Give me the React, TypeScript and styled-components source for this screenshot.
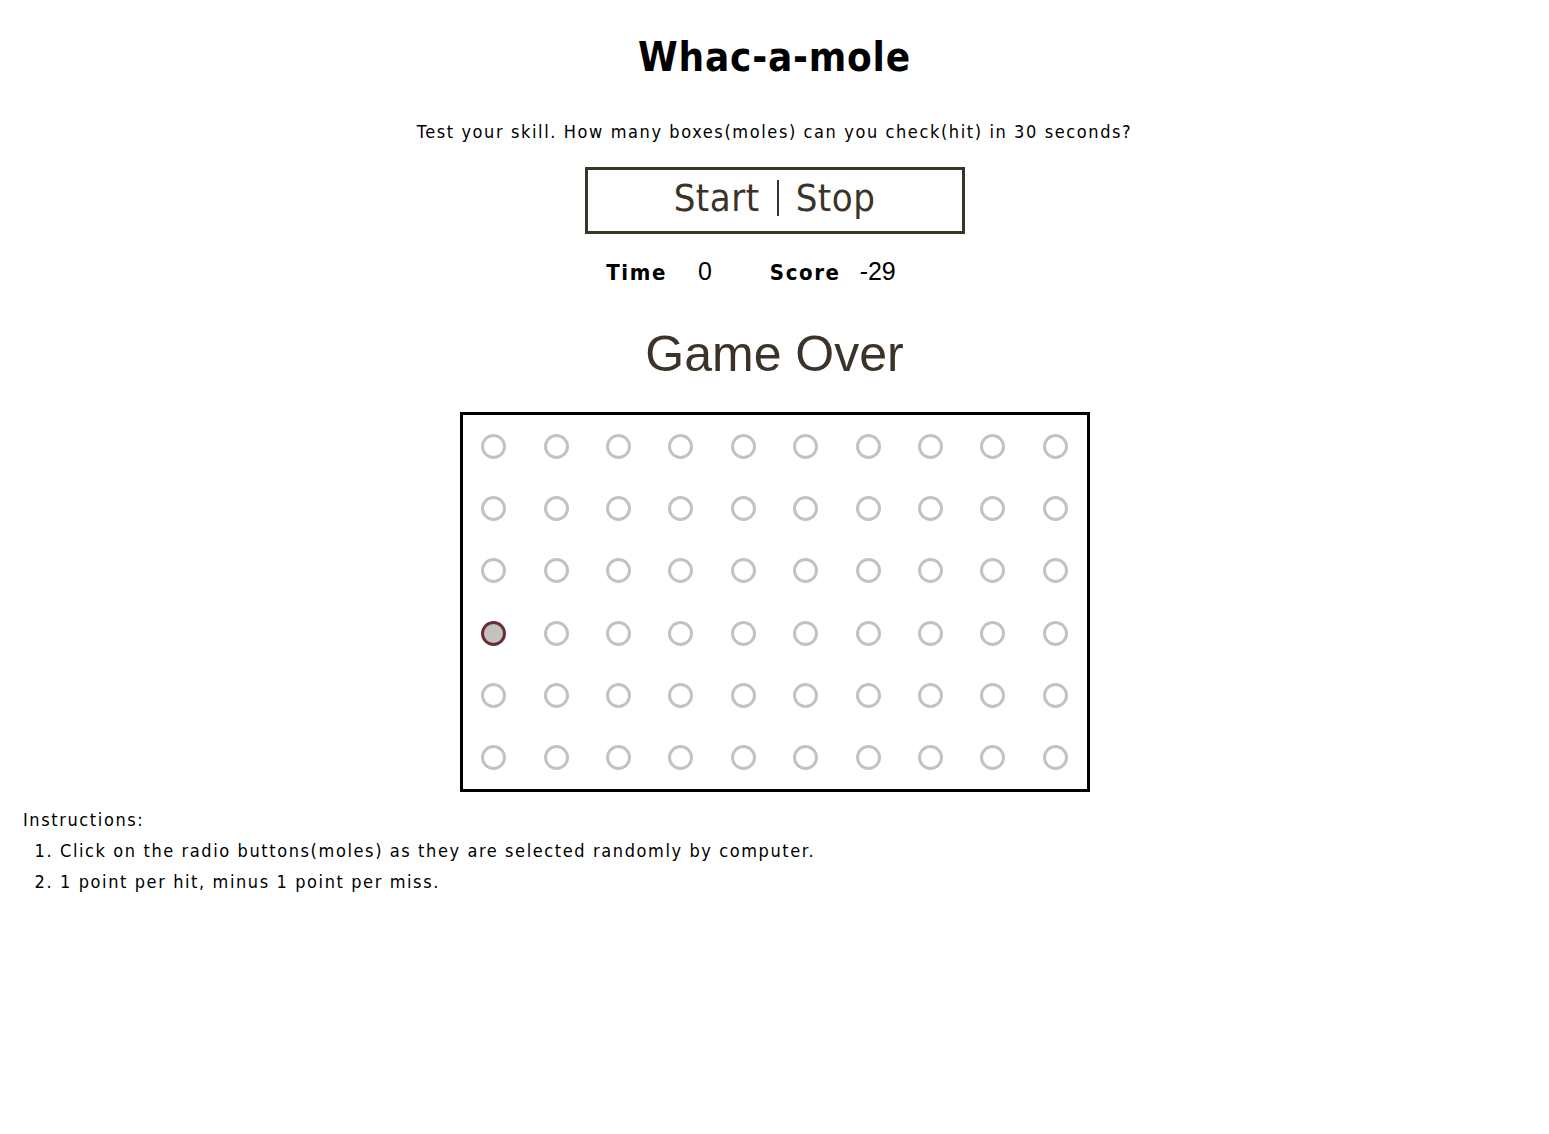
import React from 'react';
import styled, { createGlobalStyle } from 'styled-components';

const GlobalStyle = createGlobalStyle`
  html, body {
    margin: 0;
    padding: 0;
    background: #ffffff;
  }
  body {
    font-family: 'DejaVu Sans Condensed', 'DejaVu Sans', sans-serif;
    color: #000000;
  }
`;

const Page = styled.div`
  display: flex;
  flex-direction: column;
  align-items: center;
  padding-top: 32px;
`;

const Title = styled.h1`
  margin: 0;
  font-size: 40px;
  font-weight: bold;
  line-height: 50px;
  letter-spacing: 0.8px;
`;

const Intro = styled.p`
  margin: 38px 0 0;
  font-size: 18px;
  line-height: 24px;
  letter-spacing: 1.6px;
`;

const ToggleButton = styled.button`
  margin-top: 23px;
  width: 380px;
  height: 67px;
  padding: 0 0 6px;
  border: 3px solid #3b3228;
  background: #ffffff;
  color: #3b3228;
  font-family: inherit;
  font-size: 38px;
  letter-spacing: 0.5px;
  display: flex;
  align-items: center;
  justify-content: center;
  gap: 17px;
  cursor: pointer;
`;

const Divider = styled.span`
  width: 2px;
  height: 36px;
  background: #3b3228;
`;

const Stats = styled.div`
  margin-top: 22px;
  padding-right: 47px;
  display: flex;
  align-items: baseline;
  gap: 58px;
  font-size: 22px;
  line-height: 30px;
`;

const Stat = styled.div<{ $gap: number }>`
  display: flex;
  align-items: baseline;
  gap: ${({ $gap }) => $gap}px;
`;

const StatLabel = styled.span`
  font-weight: bold;
  letter-spacing: 1.6px;
`;

const StatValue = styled.span`
  font-family: 'Liberation Sans', Arial, sans-serif;
  font-size: 25px;
`;

const Status = styled.h2`
  margin: 36px 0 0;
  font-family: 'Liberation Sans', Arial, sans-serif;
  font-size: 50px;
  font-weight: normal;
  color: #3b3228;
  line-height: 60px;
`;

const Board = styled.div`
  margin-top: 28px;
  width: 624px;
  height: 374px;
  border: 3px solid #000000;
  display: grid;
  grid-template-columns: repeat(10, 1fr);
  grid-template-rows: repeat(6, 1fr);
  place-items: center;
`;

const Mole = styled.input<{ $up: boolean }>`
  appearance: none;
  margin: 0;
  width: 25px;
  height: 25px;
  border-radius: 50%;
  border: 3px solid ${({ $up }) => ($up ? '#6b2c34' : '#c2c2be')};
  background: ${({ $up }) => ($up ? '#c2c2be' : '#ffffff')};
  cursor: pointer;
`;

const Instructions = styled.div`
  align-self: flex-start;
  margin: 12px 0 0 23px;
  font-size: 18px;
  line-height: 31px;
  letter-spacing: 1.6px;
`;

const Steps = styled.ol`
  margin: 0;
  padding-left: 37px;
`;

const ROWS = 6;
const COLS = 10;
const activeMole = 30;

export default function App() {
  return (
    <>
      <GlobalStyle />
      <Page>
        <Title>Whac-a-mole</Title>
        <Intro>Test your skill. How many boxes(moles) can you check(hit) in 30 seconds?</Intro>
        <ToggleButton type="button">
          <span>Start</span>
          <Divider />
          <span>Stop</span>
        </ToggleButton>
        <Stats>
          <Stat $gap={31}>
            <StatLabel>Time</StatLabel>
            <StatValue>0</StatValue>
          </Stat>
          <Stat $gap={19}>
            <StatLabel>Score</StatLabel>
            <StatValue>-29</StatValue>
          </Stat>
        </Stats>
        <Status>Game Over</Status>
        <Board>
          {Array.from({ length: ROWS * COLS }, (_, i) => (
            <Mole
              key={i}
              type="radio"
              name={`mole-${i}`}
              $up={i === activeMole}
              readOnly
              checked={i === activeMole}
            />
          ))}
        </Board>
        <Instructions>
          Instructions:
          <Steps>
            <li>Click on the radio buttons(moles) as they are selected randomly by computer.</li>
            <li>1 point per hit, minus 1 point per miss.</li>
          </Steps>
        </Instructions>
      </Page>
    </>
  );
}
